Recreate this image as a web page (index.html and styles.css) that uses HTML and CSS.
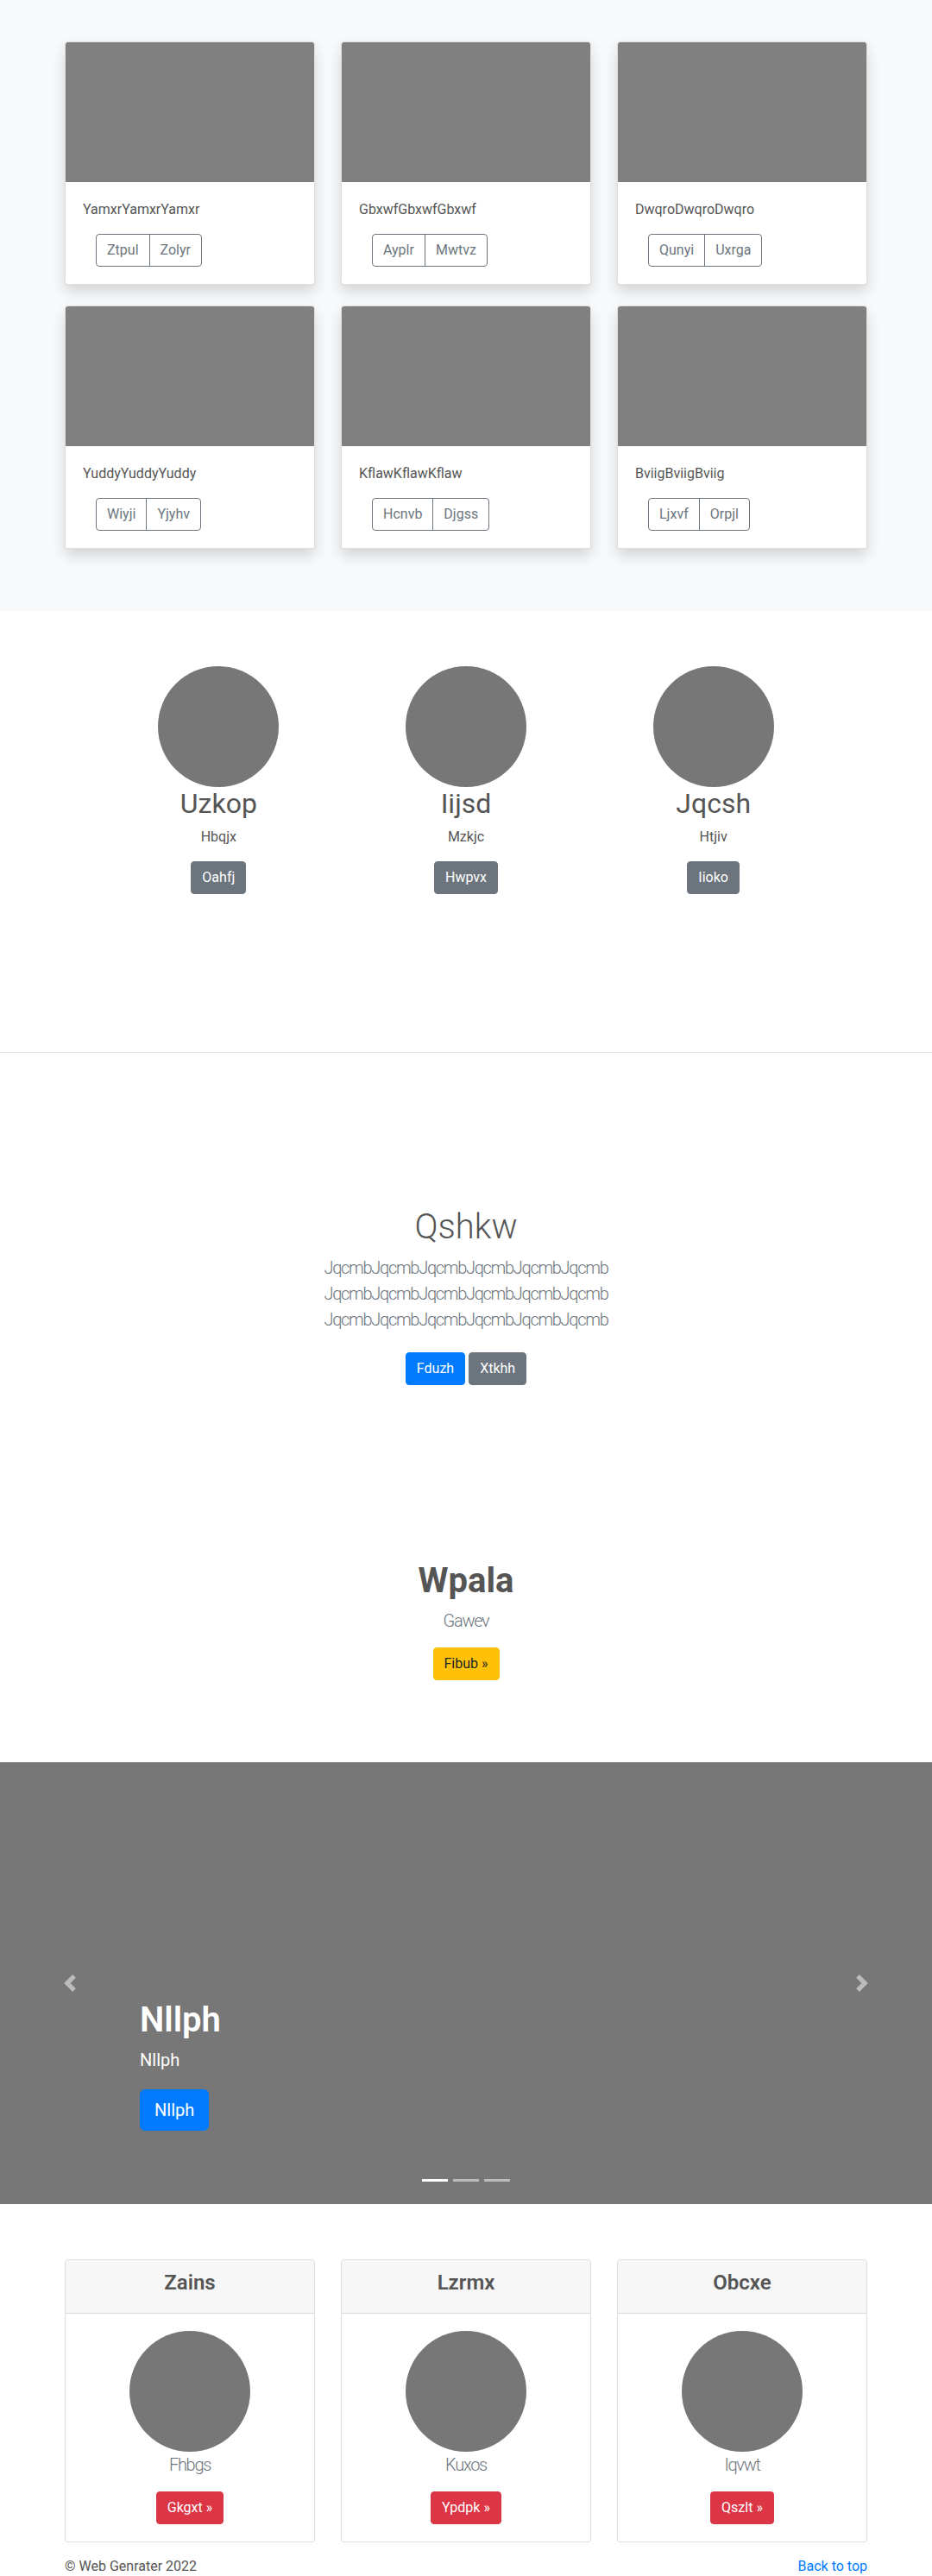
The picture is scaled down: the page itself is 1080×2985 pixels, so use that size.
FILE: index.html
```html
<!DOCTYPE html>
<html lang="en">
<head>
<meta charset="utf-8">
<title>Web Genrater</title>
<link rel="stylesheet" href="styles.css">
</head>
<body>
<section class="album">
  <div class="container grid3">
    <div class="card shadow">
      <div class="card-img"></div>
      <div class="card-body">
        <p class="card-text">YamxrYamxrYamxr</p>
        <div class="btn-group"><a class="btn btn-outline">Ztpul</a><a class="btn btn-outline">Zolyr</a></div>
      </div>
    </div>
    <div class="card shadow">
      <div class="card-img"></div>
      <div class="card-body">
        <p class="card-text">GbxwfGbxwfGbxwf</p>
        <div class="btn-group"><a class="btn btn-outline">Ayplr</a><a class="btn btn-outline">Mwtvz</a></div>
      </div>
    </div>
    <div class="card shadow">
      <div class="card-img"></div>
      <div class="card-body">
        <p class="card-text">DwqroDwqroDwqro</p>
        <div class="btn-group"><a class="btn btn-outline">Qunyi</a><a class="btn btn-outline">Uxrga</a></div>
      </div>
    </div>
    <div class="card shadow">
      <div class="card-img"></div>
      <div class="card-body">
        <p class="card-text">YuddyYuddyYuddy</p>
        <div class="btn-group"><a class="btn btn-outline">Wiyji</a><a class="btn btn-outline">Yjyhv</a></div>
      </div>
    </div>
    <div class="card shadow">
      <div class="card-img"></div>
      <div class="card-body">
        <p class="card-text">KflawKflawKflaw</p>
        <div class="btn-group"><a class="btn btn-outline">Hcnvb</a><a class="btn btn-outline">Djgss</a></div>
      </div>
    </div>
    <div class="card shadow">
      <div class="card-img"></div>
      <div class="card-body">
        <p class="card-text">BviigBviigBviig</p>
        <div class="btn-group"><a class="btn btn-outline">Ljxvf</a><a class="btn btn-outline">Orpjl</a></div>
      </div>
    </div>
  </div>
</section>

<section class="team">
  <div class="team-row">
    <div class="member">
      <div class="circle"></div>
      <h2>Uzkop</h2>
      <p>Hbqjx</p>
      <a class="btn btn-secondary">Oahfj</a>
    </div>
    <div class="member">
      <div class="circle"></div>
      <h2>Iijsd</h2>
      <p>Mzkjc</p>
      <a class="btn btn-secondary">Hwpvx</a>
    </div>
    <div class="member">
      <div class="circle"></div>
      <h2>Jqcsh</h2>
      <p>Htjiv</p>
      <a class="btn btn-secondary">Iioko</a>
    </div>
  </div>
</section>

<hr class="divider">

<section class="hero">
  <div class="hero-inner">
    <h1 class="hero-title">Qshkw</h1>
    <p class="lead">JqcmbJqcmbJqcmbJqcmbJqcmbJqcmb JqcmbJqcmbJqcmbJqcmbJqcmbJqcmb JqcmbJqcmbJqcmbJqcmbJqcmbJqcmb</p>
    <div class="hero-actions">
      <a class="btn btn-primary">Fduzh</a>
      <a class="btn btn-secondary">Xtkhh</a>
    </div>
  </div>
</section>

<section class="promo">
  <h1 class="promo-title">Wpala</h1>
  <p class="lead promo-lead">Gawev</p>
  <a class="btn btn-warning">Fibub »</a>
</section>

<div class="carousel">
  <a class="carousel-control prev" aria-label="Previous">
    <svg class="control-icon" viewBox="0 0 8 8" width="20" height="20"><path fill="#fff" d="M5.25 0l-4 4 4 4 1.5-1.5L4.25 4l2.5-2.5L5.25 0z"/></svg>
  </a>
  <div class="carousel-caption">
    <h1>Nllph</h1>
    <p class="caption-text">Nllph</p>
    <p class="caption-action"><a class="btn btn-lg btn-primary">Nllph</a></p>
  </div>
  <a class="carousel-control next" aria-label="Next">
    <svg class="control-icon" viewBox="0 0 8 8" width="20" height="20"><path fill="#fff" d="M2.75 0l-1.5 1.5L3.75 4l-2.5 2.5L2.75 8l4-4-4-4z"/></svg>
  </a>
  <ol class="indicators">
    <li class="active"></li>
    <li></li>
    <li></li>
  </ol>
</div>

<section class="pricing">
  <div class="container grid3">
    <div class="card pcard">
      <div class="card-header"><h4>Zains</h4></div>
      <div class="pcard-body">
        <div class="circle"></div>
        <h5 class="pname">Fhbgs</h5>
        <a class="btn btn-danger">Gkgxt »</a>
      </div>
    </div>
    <div class="card pcard">
      <div class="card-header"><h4>Lzrmx</h4></div>
      <div class="pcard-body">
        <div class="circle"></div>
        <h5 class="pname">Kuxos</h5>
        <a class="btn btn-danger">Ypdpk »</a>
      </div>
    </div>
    <div class="card pcard">
      <div class="card-header"><h4>Obcxe</h4></div>
      <div class="pcard-body">
        <div class="circle"></div>
        <h5 class="pname">Iqvwt</h5>
        <a class="btn btn-danger">Qszlt »</a>
      </div>
    </div>
  </div>
</section>

<footer class="footer">
  <div class="container footer-inner">
    <span class="copy">© Web Genrater 2022</span>
    <a class="back" href="#">Back to top</a>
  </div>
</footer>
</body>
</html>
```

FILE: styles.css
```css
* { box-sizing: border-box; }

html, body {
  margin: 0;
  padding: 0;
}

body {
  font-family: "Segoe UI", Roboto, "Open Sans", "Noto Sans", sans-serif;
  font-size: 16px;
  line-height: 1.5;
  color: #555;
  background: #fff;
}

h1, h2, h4, h5, p { margin: 0; }

.container {
  width: 930px;
  margin: 0 auto;
}

.grid3 {
  display: grid;
  grid-template-columns: repeat(3, 290px);
  column-gap: 30px;
  row-gap: 24px;
}

/* ---------- buttons ---------- */
.btn {
  display: inline-block;
  font-size: 16px;
  line-height: 24px;
  padding: 6px 12px;
  border: 1px solid transparent;
  border-radius: 4px;
  text-decoration: none;
  text-align: center;
  cursor: pointer;
  white-space: nowrap;
}
.btn-outline {
  color: #6c757d;
  border-color: #6c757d;
  background: transparent;
}
.btn-secondary { color: #fff; background: #6c757d; border-color: #6c757d; }
.btn-primary { color: #fff; background: #007bff; border-color: #007bff; }
.btn-warning { color: #212529; background: #ffc107; border-color: #ffc107; }
.btn-danger { color: #fff; background: #dc3545; border-color: #dc3545; }
.btn-lg {
  font-size: 20px;
  line-height: 30px;
  padding: 8px 16px;
  border-radius: 6px;
}

.btn-group { display: inline-flex; margin-left: 15px; }
.btn-group .btn:first-child { border-top-right-radius: 0; border-bottom-right-radius: 0; }
.btn-group .btn:last-child { border-top-left-radius: 0; border-bottom-left-radius: 0; margin-left: -1px; }

/* ---------- album ---------- */
.album {
  background: #f8f9fa;
  padding: 48px 0 72px;
}
.card {
  background: #fff;
  border: 1px solid rgba(0, 0, 0, 0.125);
  border-radius: 4px;
}
.shadow { box-shadow: 0 8px 16px rgba(0, 0, 0, 0.15); }
.card-img {
  height: 162px;
  background: #808080;
  border-radius: 3px 3px 0 0;
}
.card-body { padding: 20px; }
.card-text { margin-bottom: 16px; }

/* ---------- team ---------- */
.team { padding: 64px 0 183px; }
.team-row {
  width: 860px;
  margin: 0 auto;
  display: grid;
  grid-template-columns: repeat(3, 1fr);
  text-align: center;
}
.circle {
  width: 140px;
  height: 140px;
  border-radius: 50%;
  background: #777;
  margin: 0 auto;
}
.member h2 {
  font-size: 32px;
  font-weight: 400;
  line-height: 1.2;
  margin-bottom: 8px;
}
.member p { margin-bottom: 16px; }

.divider {
  margin: 0;
  border: 0;
  border-top: 1px solid #e3e3e3;
}

/* ---------- hero ---------- */
.hero {
  padding: 178px 0 95px;
  text-align: center;
}
.hero-inner { width: 450px; margin: 0 auto; }
.hero-title {
  font-size: 40px;
  font-weight: 300;
  line-height: 1.2;
  margin-bottom: 8px;
}
.lead {
  font-size: 20px;
  font-weight: 300;
  line-height: 1.5;
  color: #6c757d;
  letter-spacing: -1.3px;
}
.hero .lead { margin-bottom: 16px; }
.hero-actions { margin: 23px 0 8px; font-size: 0; }
.hero-actions .btn { font-size: 16px; margin: 0 2px; }

/* ---------- promo ---------- */
.promo {
  padding-top: 100px;
  padding-bottom: 95px;
  text-align: center;
}
.promo-title {
  font-size: 40px;
  font-weight: 700;
  line-height: 1.2;
  margin-bottom: 7px;
}
.promo-lead { margin-bottom: 16px; }

/* ---------- carousel ---------- */
.carousel {
  position: relative;
  height: 512px;
  background: #777;
  margin-bottom: 64px;
  overflow: hidden;
}
.carousel-control {
  position: absolute;
  top: 0;
  bottom: 0;
  width: 15%;
  display: flex;
  align-items: center;
  justify-content: center;
  opacity: 0.5;
}
.carousel-control.prev { left: 0; }
.carousel-control.next { right: 0; }
.control-icon { display: block; width: 20px; height: 20px; }

.carousel-caption {
  position: absolute;
  left: 15%;
  right: 15%;
  bottom: 49px;
  padding: 20px 0;
  color: #fff;
  text-align: left;
}
.carousel-caption h1 {
  font-size: 40px;
  font-weight: 600;
  line-height: 1.2;
  margin-bottom: 8px;
}
.caption-text {
  font-size: 20px;
  line-height: 1.4;
  margin-bottom: 20px;
}
.caption-action { margin-bottom: 16px; }

.indicators {
  position: absolute;
  left: 0;
  right: 0;
  bottom: 0;
  margin: 0 0 16px;
  padding: 0;
  list-style: none;
  display: flex;
  justify-content: center;
}
.indicators li {
  width: 30px;
  height: 23px;
  margin: 0 3px;
  border-top: 10px solid transparent;
  border-bottom: 10px solid transparent;
  background: #fff;
  background-clip: padding-box;
  opacity: 0.5;
}
.indicators li.active { opacity: 1; }

/* ---------- pricing ---------- */
.pcard { text-align: center; }
.card-header {
  background: #f7f7f7;
  border-bottom: 1px solid rgba(0, 0, 0, 0.125);
  padding: 12px 20px;
  border-radius: 3px 3px 0 0;
}
.card-header h4 {
  font-size: 24px;
  font-weight: 600;
  line-height: 1.2;
  margin-bottom: 8px;
}
.pcard-body { padding: 20px; }
.pname {
  font-size: 20px;
  font-weight: 300;
  line-height: 1.2;
  color: #6c757d;
  letter-spacing: -1.3px;
  margin-top: 3px;
  margin-bottom: 19px;
}

/* ---------- footer ---------- */
.footer { margin-top: 16px; }
.footer-inner {
  display: flex;
  justify-content: space-between;
  line-height: 24px;
}
.back {
  color: #007bff;
  text-decoration: none;
}
```
